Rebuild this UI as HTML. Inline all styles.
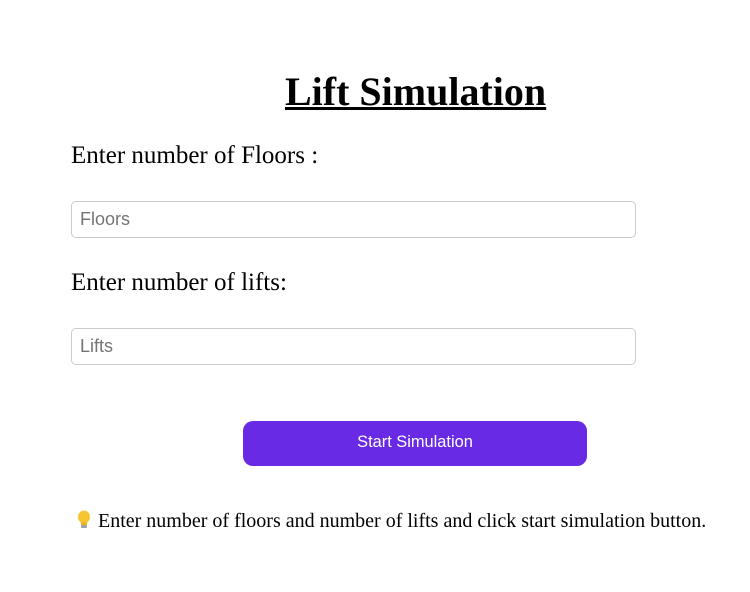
<!DOCTYPE html>
<html><head><meta charset="utf-8"><style>
body{margin:0;width:750px;height:592px;background:#fff;position:relative;font-family:"Liberation Serif",serif;color:#000;overflow:hidden}
.a{position:absolute;white-space:nowrap}
h1{position:absolute;left:285px;top:68px;margin:0;font-size:40px;font-weight:bold;text-decoration:underline;text-decoration-thickness:3px;line-height:48px;white-space:nowrap}
.lbl{font-size:25px;line-height:28px}
.inp{position:absolute;left:71px;height:35px;border:1px solid #ccc;border-radius:5px;box-sizing:content-box;font-family:"Liberation Sans",sans-serif;font-size:18px;color:#757575;line-height:35px;padding-left:8px;width:555px}
.btn{position:absolute;left:243px;top:421px;width:344px;height:45px;background:#682ae4;border-radius:10px;color:#fff;font-family:"Liberation Sans",sans-serif;font-size:16.4px;text-align:center;line-height:43px}
.tip{font-size:20px;line-height:22px}
</style></head><body>
<h1>Lift Simulation</h1>
<div class="a lbl" style="left:71px;top:142px">Enter number of Floors :</div>
<div class="inp" style="top:201px">Floors</div>
<div class="a lbl" style="left:71px;top:269px">Enter number of lifts:</div>
<div class="inp" style="top:328px">Lifts</div>
<div class="btn">Start Simulation</div>
<div class="a tip" style="left:75px;top:510px"><svg width="18" height="20" viewBox="0 0 18 20" style="vertical-align:-3px;margin-right:5px"><ellipse cx="9" cy="7" rx="6" ry="6.5" fill="#f7c533"/><rect x="6" y="12" width="6" height="3" fill="#f5b21c"/><rect x="6" y="15" width="6" height="3" rx="1" fill="#a0a0a0"/></svg>Enter number of floors and number of lifts and click start simulation button.</div>
</body></html>
